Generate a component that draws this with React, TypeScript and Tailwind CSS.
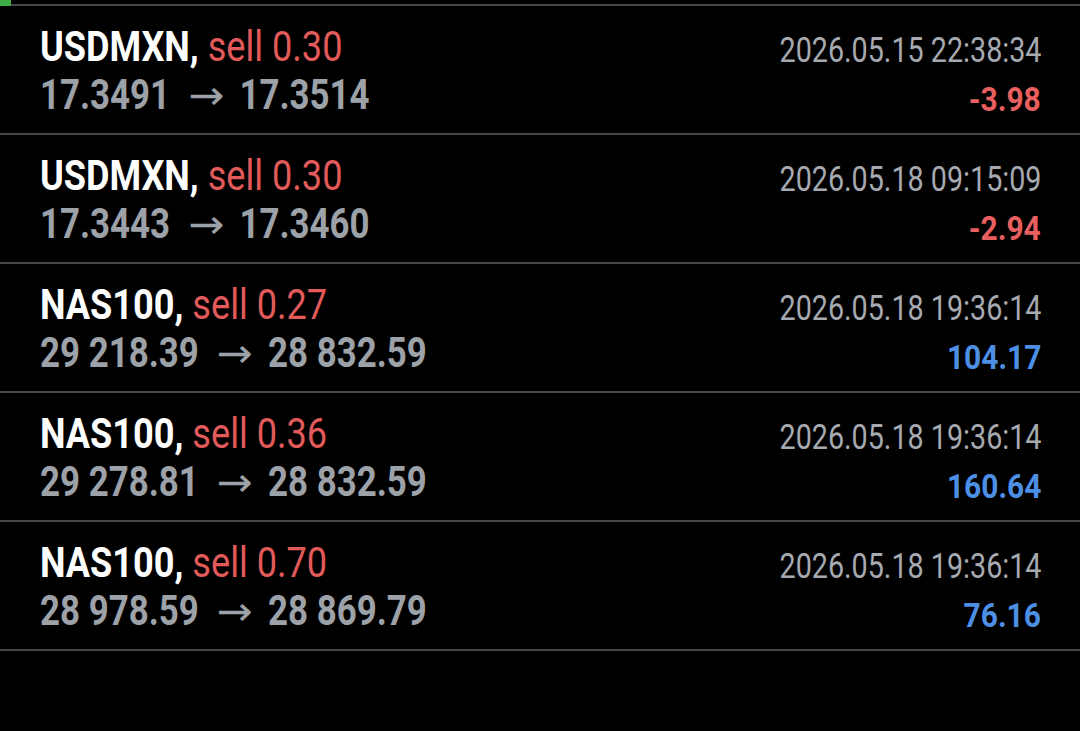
const trades = [
  { symbol: "USDMXN", side: "sell 0.30", open: "17.3491", close: "17.3514", time: "2026.05.15 22:38:34", profit: "-3.98" },
  { symbol: "USDMXN", side: "sell 0.30", open: "17.3443", close: "17.3460", time: "2026.05.18 09:15:09", profit: "-2.94" },
  { symbol: "NAS100", side: "sell 0.27", open: "29 218.39", close: "28 832.59", time: "2026.05.18 19:36:14", profit: "104.17" },
  { symbol: "NAS100", side: "sell 0.36", open: "29 278.81", close: "28 832.59", time: "2026.05.18 19:36:14", profit: "160.64" },
  { symbol: "NAS100", side: "sell 0.70", open: "28 978.59", close: "28 869.79", time: "2026.05.18 19:36:14", profit: "76.16" },
];

function TradeRow({ t }: { t: (typeof trades)[number] }) {
  const loss = t.profit.startsWith("-");
  return (
    <div className="flex h-[129px] justify-between border-b-2 border-[#46464c] pl-10 pr-[39px]">
      <div className="pt-[17px]">
        <div className="h-12 whitespace-nowrap leading-[48px]">
          <span className="inline-block origin-left scale-x-[0.86] text-[42px]">
            <span className="font-bold text-white">{t.symbol},</span>{" "}
            <span className="text-[#e25a5a]">{t.side}</span>
          </span>
        </div>
        <div className="h-12 whitespace-nowrap leading-[48px]">
          <span className="inline-block origin-left scale-x-[0.83] text-[42px] font-bold text-[#9da1a8]">
            {t.open}
            <span
              className="ml-[27px] mr-[23px] inline-block scale-x-[1.3] text-[40px] font-normal"
              style={{ fontFamily: "'DejaVu Sans', sans-serif" }}
            >
              →
            </span>
            {t.close}
          </span>
        </div>
      </div>
      <div className="flex flex-col items-end pt-[21px]">
        <div className="h-12 whitespace-nowrap leading-[48px]">
          <span className="inline-block origin-right scale-x-[0.82] text-[35px] text-[#a6aab0]">{t.time}</span>
        </div>
        <div className="h-12 whitespace-nowrap leading-[48px]">
          <span
            className={
              "inline-block origin-right scale-x-[0.88] text-[34px] font-bold " +
              (loss ? "text-[#e85f5f]" : "text-[#4d8fe5]")
            }
          >
            {t.profit}
          </span>
        </div>
      </div>
    </div>
  );
}

export default function App() {
  return (
    <div
      className="min-h-[731px] w-[1080px] bg-black"
      style={{ fontFamily: "Roboto, 'DejaVu Sans', sans-serif" }}
    >
      {/* top rule with the small green marker */}
      <div className="relative h-[6px]">
        <div className="absolute inset-x-0 bottom-0 h-[2px] bg-[#46464c]" />
        <div className="absolute left-0 top-0 h-[6px] w-[11px] bg-[#3cae45]" />
      </div>
      {trades.map((t, i) => (
        <TradeRow key={i} t={t} />
      ))}
    </div>
  );
}
